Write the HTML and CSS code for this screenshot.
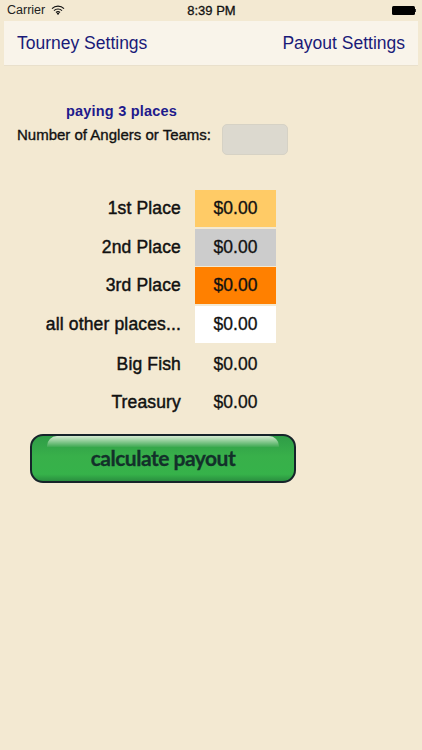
FILE: index.html
```html
<!DOCTYPE html>
<html lang="en">
<head>
<meta charset="utf-8">
<title>Payout Settings</title>
<link rel="stylesheet" href="styles.css">
</head>
<body>
<div class="status">
  <div class="status-left">
    <span>Carrier</span>
    <svg class="wifi" width="14" height="10" viewBox="0 0 14 10"><path d="M1 3.6a8.6 8.6 0 0 1 12 0M3 5.6a5.8 5.8 0 0 1 8 0M5 7.5a3 3 0 0 1 4 0" fill="none" stroke="#111" stroke-width="1.2"/><path d="M7 10 5.6 8.5a2 2 0 0 1 2.8 0z" fill="#111"/></svg>
  </div>
  <div class="status-time">8:39 PM</div>
  <div class="status-right"><span class="battery"></span><span class="battery-tip"></span></div>
</div>
<nav class="nav">
  <span>Tourney Settings</span>
  <span>Payout Settings</span>
</nav>
<main class="main">
  <div class="paying">paying 3 places</div>
  <div class="anglers">
    <span class="anglers-label">Number of Anglers or Teams:</span>
    <span class="anglers-input"></span>
  </div>
  <div class="rows">
    <div class="row"><span class="label">1st Place</span><span class="value first">$0.00</span></div>
    <div class="row"><span class="label">2nd Place</span><span class="value second">$0.00</span></div>
    <div class="row"><span class="label">3rd Place</span><span class="value third">$0.00</span></div>
    <div class="row"><span class="label">all other places...</span><span class="value other">$0.00</span></div>
    <div class="row plain"><span class="label">Big Fish</span><span class="value">$0.00</span></div>
    <div class="row plain"><span class="label">Treasury</span><span class="value">$0.00</span></div>
  </div>
  <div class="calc"><span class="calc-shine"></span><span class="calc-text">calculate payout</span></div>
</main>
</body>
</html>
```
FILE: styles.css
```css
* { box-sizing: border-box; }
html, body { margin: 0; padding: 0; }
body {
  width: 422px;
  height: 750px;
  overflow: hidden;
  background: #f3e9d2;
  font-family: "Liberation Sans", Arial, sans-serif;
  color: #111;
}
.status {
  height: 21px;
  padding: 0 6px 0 7px;
  display: grid;
  grid-template-columns: 1fr auto 1fr;
  align-items: center;
  font-size: 13px;
  line-height: 21px;
}
.status-left { display: flex; align-items: center; gap: 6px; color: #222; font-size: 12.5px; }
.wifi { margin-top: -2px; }
.status-time { color: #111; -webkit-text-stroke: 0.3px #111; }
.status-right { display: flex; justify-content: flex-end; align-items: center; }
.battery { width: 23px; height: 9px; background: #000; border-radius: 1.5px; }
.battery-tip { width: 1.5px; height: 3px; background: #333; }
.nav {
  margin: 0 4px;
  height: 45px;
  padding: 0 13px;
  background: #f9f4ea;
  border-bottom: 1px solid #e9e0cc;
  display: flex;
  justify-content: space-between;
  align-items: center;
  font-size: 17.5px;
  color: #1a1a78;
}
.main { padding-top: 37px; }
.paying {
  margin-left: 66px;
  font-size: 14.5px;
  line-height: 16px;
  font-weight: 700;
  letter-spacing: 0.2px;
  color: #1e1a8c;
}
.anglers { display: flex; align-items: flex-start; margin-top: 5px; padding-left: 17px; }
.anglers-label {
  width: 205px;
  font-size: 15px;
  line-height: 18px;
  color: #111;
  margin-top: 2px;
  white-space: nowrap;
  -webkit-text-stroke: 0.35px #111;
}
.anglers-input {
  width: 66px;
  height: 31px;
  background: #dcd9cf;
  border: 1px solid #d6d2c5;
  border-radius: 5px;
}
.rows { margin-top: 35px; display: grid; grid-auto-rows: 37px; row-gap: 1.7px; }
.row { display: flex; align-items: center; }
.plain { padding-top: 2px; }
.label {
  width: 181px;
  text-align: right;
  font-size: 17.5px;
  letter-spacing: 0.15px;
  white-space: nowrap;
  -webkit-text-stroke: 0.45px #111;
}
.value {
  width: 81px;
  margin-left: 14px;
  align-self: stretch;
  display: flex;
  align-items: center;
  justify-content: center;
  font-size: 17.5px;
  -webkit-text-stroke: 0.3px #111;
}
.first { background: #ffcb66; }
.second { background: #cccccc; }
.third { background: #ff8000; }
.other { background: #ffffff; }
.calc {
  position: relative;
  margin: 13.8px 0 0 30px;
  width: 266px;
  height: 49px;
  border: 2px solid #16242a;
  border-radius: 13px;
  background: linear-gradient(#2f9c47 0, #38b04a 45%, #36b24a 85%, #2a8f40 100%);
  display: flex;
  align-items: center;
  justify-content: center;
}
.calc-shine {
  position: absolute;
  top: 0;
  left: 15px;
  right: 15px;
  height: 11px;
  border-radius: 10px 10px 0 0;
  background: linear-gradient(#d4ebd2, #3fa952);
}
.calc-text {
  position: relative;
  top: -1px;
  font-family: "Lato", sans-serif;
  font-size: 21px;
  font-weight: 700;
  letter-spacing: -0.5px;
  color: #13302a;
  -webkit-text-stroke: 0.3px #13302a;
}
```
